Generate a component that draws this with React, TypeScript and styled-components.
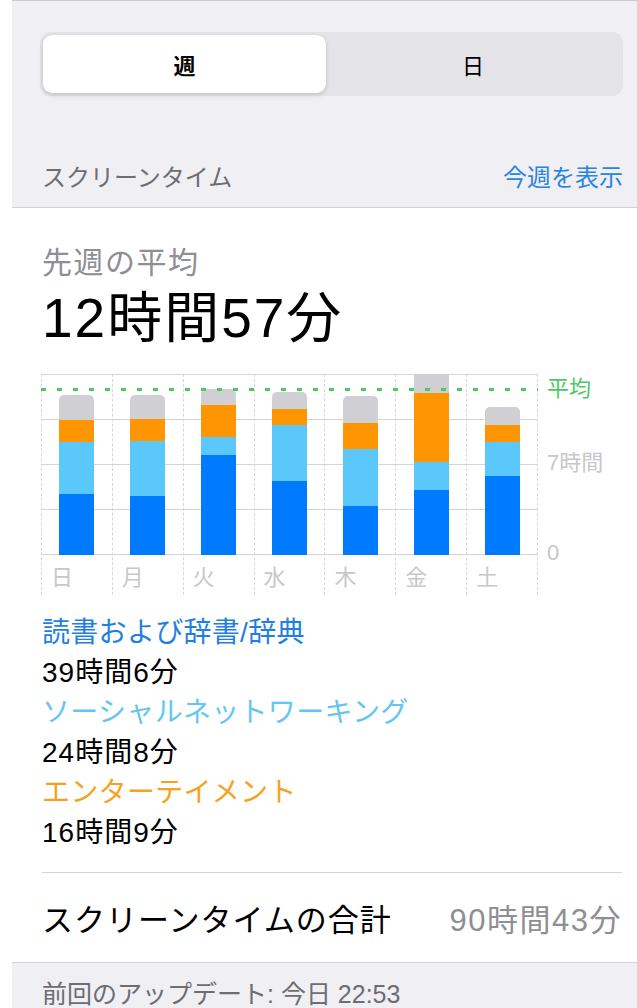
import React from 'react';
import styled, { createGlobalStyle } from 'styled-components';

const GlobalStyle = createGlobalStyle`
    html, body {
        margin: 0;
        padding: 0;
        background: #ffffff;
    }
    body {
        font-family: "Liberation Sans", "Noto Sans CJK JP", sans-serif;
        color: #000000;
        -webkit-font-smoothing: antialiased;
    }
`;

const Page = styled.div`
    width: 637px;
    height: 1008px;
    overflow: hidden;
    display: flex;
    flex-direction: column;
    background: #ffffff;
`;

const TopArea = styled.div`
    margin-left: 12px;
    padding: 31px 14px 0 28px;
    background: #efeff4;
    border-top: 1px solid #c9c9ce;
    border-bottom: 1px solid #d1d1d6;
`;

const Segmented = styled.div`
    display: flex;
    height: 64px;
    padding: 3px;
    box-sizing: border-box;
    border-radius: 11px;
    background: #e3e3e8;
`;

const Segment = styled.div<{ $active?: boolean }>`
    flex: ${(p) => (p.$active ? '0 0 283px' : '1')};
    display: flex;
    align-items: center;
    justify-content: center;
    border-radius: 9px;
    background: ${(p) => (p.$active ? '#ffffff' : 'transparent')};
    box-shadow: ${(p) => (p.$active ? '0 2px 5px rgba(0, 0, 0, 0.14), 0 0 1px rgba(0, 0, 0, 0.1)' : 'none')};
    font-size: 22px;
    font-weight: ${(p) => (p.$active ? 700 : 400)};
    color: #000000;
`;

const SectionHeader = styled.div`
    display: flex;
    justify-content: space-between;
    align-items: center;
    padding: 67px 0 14px 2px;
    line-height: 30px;
    font-size: 24px;
    color: #6d6d72;
`;

const HeaderLink = styled.span`
    color: #2a84e2;
`;

const Content = styled.div`
    padding: 35px 15px 0 42px;
`;

const Subtitle = styled.div`
    line-height: 40px;
    font-size: 30px;
    letter-spacing: 1.5px;
    color: #8e8e93;
`;

const BigValue = styled.div`
    margin-top: 5px;
    line-height: 60px;
    font-size: 55px;
    letter-spacing: 2px;
    color: #000000;
`;

const ChartRow = styled.div`
    display: flex;
    margin-top: 26px;
    margin-left: -1px;
`;

const ChartBody = styled.div`
    position: relative;
    display: flex;
    width: 497px;
`;

const DayColumn = styled.div<{ $last?: boolean }>`
    flex: 1;
    display: flex;
    flex-direction: column;
    border-left: 1px dashed #d6d6da;
    border-right: ${(p) => (p.$last ? '1px dashed #d6d6da' : 'none')};
`;

const BarSlot = styled.div`
    height: 181px;
    display: flex;
    align-items: flex-end;
    justify-content: center;
    overflow: hidden;
    background: repeating-linear-gradient(
        to bottom,
        #d3d3d8 0,
        #d3d3d8 1px,
        transparent 1px,
        transparent 45px
    );
`;

const Bar = styled.div`
    width: 35px;
    display: flex;
    flex-direction: column;
    border-radius: 5px 5px 0 0;
    overflow: hidden;
`;

const BarPart = styled.div<{ $color: string }>`
    background: ${(p) => p.$color};
`;

const DayLabel = styled.div`
    height: 40px;
    padding: 8px 0 0 9px;
    box-sizing: border-box;
    line-height: 30px;
    font-size: 22px;
    color: #c7c7cc;
`;

const AverageLine = styled.div`
    position: absolute;
    top: 14px;
    left: 0;
    right: 0;
    height: 3px;
    background: repeating-linear-gradient(
        to right,
        #4cc964 0,
        #4cc964 5px,
        transparent 5px,
        transparent 16px
    );
`;

const Axis = styled.div`
    display: flex;
    flex-direction: column;
    padding-left: 9px;
    font-size: 22px;
    line-height: 30px;
    color: #c7c7cc;
`;

const AxisLabel = styled.div<{ $gap: number; $green?: boolean }>`
    margin-top: ${(p) => p.$gap}px;
    color: ${(p) => (p.$green ? '#4cc964' : '#c7c7cc')};
    white-space: nowrap;
`;

const Legend = styled.div`
    margin-top: 18px;
    display: flex;
    flex-direction: column;
`;

const LegendLine = styled.div<{ $color?: string }>`
    line-height: 40px;
    font-size: 28px;
    letter-spacing: ${(p) => (p.$color ? '0.3px' : '1px')};
    color: ${(p) => p.$color || '#000000'};
`;

const TotalRow = styled.div`
    margin-top: 19px;
    height: 90px;
    box-sizing: border-box;
    border-top: 1px solid #d1d1d6;
    display: flex;
    align-items: center;
    justify-content: space-between;
    font-size: 31px;
    letter-spacing: 1px;
`;

const TotalValue = styled.span`
    color: #8e8e93;
    letter-spacing: 1.5px;
`;

const Footer = styled.div`
    flex: 1;
    margin-left: 12px;
    padding: 16px 0 0 30px;
    background: #efeff4;
    border-top: 1px solid #d1d1d6;
    line-height: 30px;
    font-size: 25px;
    color: #6d6d72;
`;

const BLUE = '#007aff';
const LIGHT = '#5ac8fa';
const ORANGE = '#ff9500';
const GREY = '#cfcfd4';

const days = [
    { label: '日', parts: [25, 22, 52, 61] },
    { label: '月', parts: [24, 22, 55, 59] },
    { label: '火', parts: [16, 32, 18, 100] },
    { label: '水', parts: [17, 16, 56, 74] },
    { label: '木', parts: [27, 26, 57, 49] },
    { label: '金', parts: [22, 69, 28, 65] },
    { label: '土', parts: [18, 17, 34, 79] },
];

const partColors = [GREY, ORANGE, LIGHT, BLUE];

export default function App() {
    return (
        <Page>
            <GlobalStyle />
            <TopArea>
                <Segmented>
                    <Segment $active>週</Segment>
                    <Segment>日</Segment>
                </Segmented>
                <SectionHeader>
                    <span>スクリーンタイム</span>
                    <HeaderLink>今週を表示</HeaderLink>
                </SectionHeader>
            </TopArea>
            <Content>
                <Subtitle>先週の平均</Subtitle>
                <BigValue>12時間57分</BigValue>
                <ChartRow>
                    <ChartBody>
                        {days.map((d, i) => (
                            <DayColumn key={d.label} $last={i === days.length - 1}>
                                <BarSlot>
                                    <Bar>
                                        {d.parts.map((h, j) => (
                                            <BarPart key={j} $color={partColors[j]} style={{ height: h }} />
                                        ))}
                                    </Bar>
                                </BarSlot>
                                <DayLabel>{d.label}</DayLabel>
                            </DayColumn>
                        ))}
                        <AverageLine />
                    </ChartBody>
                    <Axis>
                        <AxisLabel $gap={0} $green>平均</AxisLabel>
                        <AxisLabel $gap={44}>7時間</AxisLabel>
                        <AxisLabel $gap={60}>0</AxisLabel>
                    </Axis>
                </ChartRow>
                <Legend>
                    <LegendLine $color="#1f7fe3">読書および辞書/辞典</LegendLine>
                    <LegendLine>39時間6分</LegendLine>
                    <LegendLine $color="#64c6f2">ソーシャルネットワーキング</LegendLine>
                    <LegendLine>24時間8分</LegendLine>
                    <LegendLine $color="#f6a21e">エンターテイメント</LegendLine>
                    <LegendLine>16時間9分</LegendLine>
                </Legend>
                <TotalRow>
                    <span>スクリーンタイムの合計</span>
                    <TotalValue>90時間43分</TotalValue>
                </TotalRow>
            </Content>
            <Footer>前回のアップデート: 今日 22:53</Footer>
        </Page>
    );
}
